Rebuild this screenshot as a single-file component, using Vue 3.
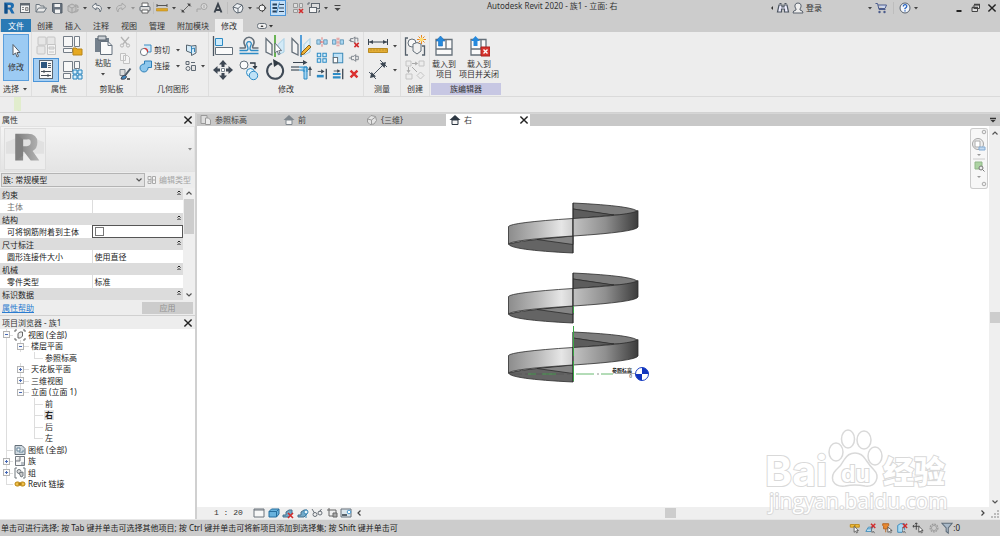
<script setup>
import { ref } from 'vue'

const quickAccess = [
  { icon: 'logo', label: 'Revit' },
  { icon: 'window', label: '主页' },
  { icon: 'open', label: '打开' },
  { icon: 'save', label: '保存' },
  { icon: 'sync', label: '同步' },
  { caret: true },
  { icon: 'undo', label: '放弃' },
  { caret: true },
  { icon: 'redo', label: '重做' },
  { caret: true, dim: true },
  { icon: 'print', label: '打印' },
  { sep: true, tight: true },
  { icon: 'ruler', label: '测量' },
  { caret: true },
  { icon: 'dimension', label: '对齐尺寸标注' },
  { icon: 'tag', label: '按类别标记' },
  { icon: 'letter', label: '文字' },
  { sep: true },
  { icon: 'house', label: '默认三维视图' },
  { caret: true },
  { icon: 'section', label: '剖面' },
  { icon: 'thin', label: '细线', on: true },
  { sep: true },
  { icon: 'closehidden', label: '关闭非活动视图' },
  { icon: 'switch', label: '切换窗口' },
  { caret: true },
  { icon: 'customize', label: '自定义快速访问工具栏' },
]

const ribbonTabs = ['文件', '创建', '插入', '注释', '视图', '管理', '附加模块', '修改']
const activeRibbon = ref('修改')

const modifyLarge = [
  ['align', '对齐'], ['offset', '偏移'], ['mirrorpick', '镜像 - 拾取轴'], ['mirrordraw', '镜像 - 绘制轴'],
  ['move', '移动'], ['copy', '复制'], ['rotate', '旋转'], ['trim', '修剪'],
]
const modifySmall = [
  ['split', '拆分图元'], ['splitgap', '用间隙拆分'], ['unpin', '解锁'],
  ['array', '阵列'], ['scale', '缩放'], ['pin', '锁定'],
  ['extend', '修剪/延伸单个图元'], ['extendmulti', '修剪/延伸多个图元'], ['delete', '删除'],
]

const groups = [
  { name: '约束', prop: '主体', value: '', dim: true },
  { name: '结构', prop: '可将钢筋附着到主体', check: true },
  { name: '尺寸标注', prop: '圆形连接件大小', value: '使用直径' },
  { name: '机械', prop: '零件类型', value: '标准' },
  { name: '标识数据' },
]
const attachRebar = ref(false)
const family = ref('族: 常规模型')

const tree = [
  { text: '视图 (全部)', level: 0, box: '-', icon: 'views' },
  { text: '楼层平面', level: 1, box: '-' },
  { text: '参照标高', level: 2, last: true },
  { text: '天花板平面', level: 1, box: '+' },
  { text: '三维视图', level: 1, box: '+' },
  { text: '立面 (立面 1)', level: 1, box: '-', last: true },
  { text: '前', level: 2 },
  { text: '右', level: 2, active: true },
  { text: '后', level: 2 },
  { text: '左', level: 2, last: true },
  { text: '图纸 (全部)', level: 0, icon: 'sheets' },
  { text: '族', level: 0, box: '+', icon: 'families' },
  { text: '组', level: 0, box: '+', icon: 'groups' },
  { text: 'Revit 链接', level: 0, icon: 'link', last: true },
]

const viewTabs = [
  { text: '参照标高', icon: 'plan' },
  { text: '前', icon: 'elev' },
  { text: '{三维}', icon: 'cube' },
  { text: '右', icon: 'elev', active: true },
]
const viewControls = [
  ['detail', '详细程度'], ['style', '视觉样式'], ['sunoff', '日光路径'], ['shadow', '阴影'],
  ['glasses', '临时隐藏/隔离'], ['crop', '裁剪区域'], ['reveal', '显示约束'],
]
const selectionTools = [
  ['sellink', '选择链接'], ['selunder', '选择基线图元'], ['selpin', '选择锁定图元'],
  ['selface', '按面选择图元'], ['seldrag', '选择时拖拽图元'], ['gear', '后台进程'], ['filter', '过滤器'],
]
const turns = [0, 70, 129]
</script>

<template>
  <div class="app">
    <svg class="defs" aria-hidden="true">
      <defs>
        <linearGradient id="band-left"><stop offset="0" stop-color="#8c8c8c" /><stop offset=".45" stop-color="#b9b9b9" /><stop offset=".82" stop-color="#e6e6e6" /><stop offset="1" stop-color="#cfcfcf" /></linearGradient>
        <linearGradient id="band-right"><stop offset="0" stop-color="#c2c2c2" /><stop offset=".5" stop-color="#8f8f8f" /><stop offset="1" stop-color="#3c3c3c" /></linearGradient>
        <linearGradient id="logo-grey"><stop offset="0" stop-color="#7c7c7c" /><stop offset="1" stop-color="#b4b4b4" /></linearGradient>
      </defs>
      <symbol id="caret" viewBox="0 0 8 8"><path d="M2 3h4L4 5.5z" fill="#444" /></symbol>
      <symbol id="close" viewBox="0 0 10 10"><path d="M2 2l6 6M8 2L2 8" stroke="#222" stroke-width="1.2" /></symbol>
      <symbol id="up" viewBox="0 0 10 10"><path d="M2.500 6.500L5 4l2.500 2.500" fill="none" stroke="#555" stroke-width="1.200" /></symbol>
      <symbol id="down" viewBox="0 0 10 10"><path d="M2.500 3.500L5 6l2.500-2.500" fill="none" stroke="#555" stroke-width="1.200" /></symbol>
      <symbol id="left" viewBox="0 0 10 10"><path d="M6.500 2.500L4 5l2.500 2.500" fill="none" stroke="#444" stroke-width="1.200" /></symbol>
      <symbol id="right" viewBox="0 0 10 10"><path d="M3.500 2.500L6 5 3.500 7.500" fill="none" stroke="#444" stroke-width="1.200" /></symbol>
      <symbol id="fold" viewBox="0 0 8 8"><path d="M2.500 3.500L4 2l1.500 1.500M2.500 6L4 4.500 5.500 6" fill="none" stroke="#222" /></symbol>

      <symbol id="logo" viewBox="0 0 16 16"><path d="M3.500 2.500h6q3.500 0 3.500 3 0 2.400-2 3l2.500 5h-3L8.300 9.500H6.500v4h-3zM6.500 5v2.400h2.300q1.200 0 1.200-1.200T8.800 5z" fill="#1f6db0" fill-rule="evenodd" /><path d="M3.500 2.500l3 2.500v8.500h-3z" fill="#144f86" /></symbol>
      <symbol id="window" viewBox="0 0 16 16"><rect x="3.500" y="3.500" width="9" height="9" fill="#f4f4f4" stroke="#606870" /><path d="M3 3.500h10v2H3z" fill="#606870" /><path d="M5 7.500h2M5 9.500h2M8.500 7.500h2.500v3H8.500z" stroke="#888" fill="#ccc" /></symbol>
      <symbol id="open" viewBox="0 0 16 16"><path d="M3 12V4.500h3.500L7.500 6H11v2M3 12l2.500-4H13.500l-2.500 4z" fill="#e8e8e8" stroke="#6c767f" /></symbol>
      <symbol id="save" viewBox="0 0 16 16"><path d="M3.500 3.500h9.500v9.500h-8l-1.500-1.500z" fill="#6a7480" stroke="#545e69" /><path d="M5.500 4h5.500v3H5.500zM6 9.500h5V13H6z" fill="#f2f2f2" /></symbol>
      <symbol id="sync" viewBox="0 0 16 16"><path d="M3 6l4-2 4 2v5l-4 2-4-2zM3 6l4 2 4-2M7 8v5" fill="#c4c4c4" stroke="#a2a2a2" /><path d="M10 5q3 0 3 3M9 12q4 0 4-3" stroke="#aaa" fill="none" stroke-width="1.500" /></symbol>
      <symbol id="undo" viewBox="0 0 16 16"><path d="M7 3L3 6.500 7 10V8q4-.5 4 4 2-2.500 1.300-4.500Q11 5 7 5z" fill="#eee" stroke="#66717c" /></symbol>
      <symbol id="redo" viewBox="0 0 16 16"><path d="M9 3l4 3.500L9 10V8q-4-.5-4 4-2-2.500-1.300-4.500Q5 5 9 5z" fill="#ccc" stroke="#a8a8a8" /></symbol>
      <symbol id="print" viewBox="0 0 16 16"><path d="M5 7V3h6v4" fill="#fff" stroke="#666" /><rect x="3" y="6.500" width="10" height="4.500" rx="1" fill="#ddd" stroke="#606870" /><path d="M5 10h6v3H5z" fill="#fff" stroke="#666" /></symbol>
      <symbol id="ruler" viewBox="0 0 16 16"><path d="M3 5.500h10M3 4v3M13 4v3" stroke="#555" /><path d="M2.500 8.500h11V11h-11z" fill="#e0a624" stroke="#b98a20" stroke-width=".6" /></symbol>
      <symbol id="dimension" viewBox="0 0 16 16"><path d="M4 12l8-8M3 9.500L6.500 13M9.500 3L13 6.500" stroke="#666" fill="none" /><path d="M3.500 12.500l.5-3 2.500 2.500zM12.500 3.500l-.5 3L9.500 4z" fill="#444" /></symbol>
      <symbol id="tag" viewBox="0 0 16 16"><circle cx="10" cy="6.500" r="3" fill="#d9d9d9" stroke="#a4a4a4" /><path d="M3 12V9h4M10 5v3" stroke="#a4a4a4" fill="none" /></symbol>
      <symbol id="letter" viewBox="0 0 16 16"><path d="M4.500 12.500L8 4l3.500 8.500M6 10h4" fill="none" stroke="#3b434c" stroke-width="1.900" /></symbol>
      <symbol id="house" viewBox="0 0 16 16"><path d="M3 7l4-3.500 5 1.500 1 3-1.500 4L7 13l-3-2.500z" fill="#eef1f4" stroke="#5c6670" /><path d="M3 7l5 1.500L12 5M8 8.500V13" fill="none" stroke="#5c6670" /></symbol>
      <symbol id="section" viewBox="0 0 16 16"><circle cx="8" cy="8" r="3" fill="#f4f4f4" stroke="#444" /><path d="M8 3.500L12.500 8 8 12.500V11a3 3 0 0 0 0-6z" fill="#444" /><path d="M2.500 8H5" stroke="#444" /></symbol>
      <symbol id="thin" viewBox="0 0 16 16"><path d="M2.500 4.500H7M2.500 8H7M2.500 11.500H7" stroke="#28425c" stroke-width="2" /><path d="M9 4.500h5M9 8h5M9 11.500h5" stroke="#28425c" /><path d="M9.500 2.500L6.500 13" stroke="#4a90cc" /></symbol>
      <symbol id="closehidden" viewBox="0 0 16 16"><path d="M3.500 3.500h4v4h-4zM9.500 3.500h3v4h-3zM3.500 9.500h4v3h-4z" fill="#ddd" stroke="#999" /><path d="M9 9l4 4M13 9l-4 4" stroke="#d22c2c" stroke-width="1.600" /></symbol>
      <symbol id="switch" viewBox="0 0 16 16"><rect x="5.500" y="3.500" width="8" height="5" fill="#ddd" stroke="#606870" /><rect x="3.500" y="7.500" width="7" height="5" fill="#f4f4f4" stroke="#606870" /><path d="M2 5V3h2M13.500 10v2H12" fill="none" stroke="#606870" /></symbol>
      <symbol id="customize" viewBox="0 0 16 16"><path d="M4.500 5.500h6" stroke="#444" /><path d="M4.500 8h6l-3 3z" fill="#444" /></symbol>

      <symbol id="binoculars" viewBox="0 0 14 14"><path d="M3 4h3v2h2V4h3l1.500 7h-4V8h-3v3h-4z" fill="#eef" stroke="#4c5560" stroke-width="1.200" /><path d="M3.500 2.500h2M8.500 2.500h2" stroke="#4c5560" /></symbol>
      <symbol id="user" viewBox="0 0 14 14"><path d="M2 12q0-2.500 3-3V8Q3.500 6 4 4q.5-2 3-2t3 2q.5 2-1 4v1q3 .5 3 3z" fill="#eee" stroke="#58616c" /></symbol>
      <symbol id="cart" viewBox="0 0 14 14"><path d="M1.500 2.500h2l1.500 6h6.500M4 4h8.500L11 7.500H5" fill="#ccd7f0" stroke="#4c5c8c" /><circle cx="5.500" cy="11" r="1.200" fill="#4c5c8c" /><circle cx="10.500" cy="11" r="1.200" fill="#4c5c8c" /></symbol>
      <symbol id="help" viewBox="0 0 14 14"><circle cx="7" cy="7" r="5" fill="#f3f6fb" stroke="#56606c" /><path d="M5.300 5.500q0-1.800 1.800-1.800t1.700 1.600Q8.800 6.500 7 7.500v.8M7 9.300v1.200" fill="none" stroke="#2763c0" stroke-width="1.300" /></symbol>
      <symbol id="restore" viewBox="0 0 14 14"><path d="M5 4h5.500v3.500H5zM3 6.500h5.500v4H3z" fill="#ddd" stroke="#444" /><path d="M5 3.500h6M3 6.500h6" stroke="#444" stroke-width="1.300" /></symbol>
      <symbol id="minimize" viewBox="0 0 14 14"><path d="M4.500 10h5" stroke="#222" stroke-width="2" /></symbol>

      <symbol id="cursor" viewBox="0 0 12 16"><path d="M3 1.500v10.500l2.500-2 1.500 4 1.500-.7-1.500-3.800h3z" fill="#fff" stroke="#555d66" /></symbol>
      <symbol id="typeprops" viewBox="0 0 22 22"><g fill="#e6e6e6" stroke="#c4c4c4"><rect x="3" y="2" width="8" height="8" rx="1" /><rect x="12" y="2" width="8" height="8" rx="1" /><rect x="2" y="11" width="8" height="8" rx="1" /><path d="M12.500 9.500h8v10h-8z" fill="#f3f3f3" /><path d="M14 12h5v2h-5zM14 17h5" /></g></symbol>
      <symbol id="famcat" viewBox="0 0 22 22"><g fill="#f7f7f7" stroke="#747d87"><path d="M2.500 1.500h9v10h-9zM13.500 1.500h5v10h-5zM2.500 13.500h9v4h-9z" /></g><path d="M12 13h3l1 1h5v6h-9z" fill="#e6a921" stroke="#b98618" /></symbol>
      <symbol id="props" viewBox="0 0 22 22"><rect x="4.500" y="1.500" width="13" height="18" fill="#f8f8f8" stroke="#566473" /><path d="M6 3h6v6H6z" fill="#2c5680" /><path d="M13 4.500h3M13 6.500h3M13 8.500h3" stroke="#566473" /><path d="M6 12.500h10M6 16.500h10M9 11v3M13 15v3" stroke="#444d57" /></symbol>
      <symbol id="famtypes" viewBox="0 0 22 22"><g fill="#f7f7f7" stroke="#747d87"><path d="M2.500 2.500h9v10h-9zM13.500 2.500h5v7h-5zM2.500 14.500h7v5h-7z" /></g><path d="M12 11h4v4h-4zM17 11h4v4h-4zM12 16h4v4h-4zM17 16h4v4h-4z" fill="#d9effb" stroke="#2783bd" /></symbol>
      <symbol id="paste" viewBox="0 0 22 22"><path d="M3 4h14v14H3z" fill="#74808c" /><path d="M6 2h8v4H6z" fill="#c9ced3" stroke="#59636d" /><path d="M8.500 7.500H16l4 4v9H8.500z" fill="#fafafa" stroke="#65717e" /><path d="M16 7.500v4h4" fill="none" stroke="#65717e" /></symbol>
      <symbol id="cut" viewBox="0 0 14 14"><path d="M3 2l6 7M11 2L5 9" stroke="#b4b4b4" stroke-width="1.300" /><circle cx="4" cy="10.500" r="1.600" fill="none" stroke="#b4b4b4" /><circle cx="10" cy="10.500" r="1.600" fill="none" stroke="#b4b4b4" /></symbol>
      <symbol id="copyclip" viewBox="0 0 14 14"><path d="M2.500 2.500h5v7h-5zM5.500 4.500h4l2 2v6h-6z" fill="#f3f3f3" stroke="#c2c2c2" /></symbol>
      <symbol id="match" viewBox="0 0 14 14"><path d="M2 2.500h5v6H2z" fill="#ddd" stroke="#7c848c" /><path d="M12.500 1.500L7.500 8" stroke="#505a66" stroke-width="2" /><path d="M3 12q0-3 4-4l1.500 1.500Q8 13 3 12z" fill="#4289bd" stroke="#445" /><path d="M9 11h3v2H9z" fill="#666" /></symbol>
      <symbol id="cutgeo" viewBox="0 0 14 14"><path d="M5 2h7v7H8" fill="#cfe8f8" stroke="#3a8bc2" /><circle cx="5" cy="9" r="3.600" fill="#fff" stroke="#707a84" /><path d="M5.500 5.400A3.600 3.600 0 0 1 8.600 9" fill="none" stroke="#d33" stroke-width="1.200" /></symbol>
      <symbol id="joingeo" viewBox="0 0 14 14"><path d="M5.500 2h7v6.500H9A4 4 0 1 1 5.500 5z" fill="#8ec7ec" stroke="#2c7fb7" /></symbol>
      <symbol id="cope" viewBox="0 0 14 14"><path d="M2.500 2l5 1 4.500-.5v7.500L7.500 12.500V10l-5-2z" fill="#d5ebf8" stroke="#56646f" /><path d="M7.500 3v7M7.500 6l3-1v4" fill="none" stroke="#3787bb" /></symbol>
      <symbol id="wall" viewBox="0 0 14 14"><path d="M2 2.500h3v3H2zM7.500 6.500h4v5h-4z" fill="#e4e4e4" stroke="#606a74" /><circle cx="4" cy="9.500" r="2" fill="none" stroke="#606a74" /><path d="M7 3.500h4" stroke="#606a74" /></symbol>

      <symbol id="align" viewBox="0 0 22 22"><path d="M1.500 1v20" stroke="#4b5662" stroke-width="1.300" /><path d="M3.500 3.500h7v7h-7z" fill="#cdebfb" stroke="#2d8bc5" /><path d="M3.500 12.500h17v7h-17z" fill="#fafafa" stroke="#65707a" /></symbol>
      <symbol id="offset" viewBox="0 0 22 22"><path d="M1.500 13H7q1-1-.5-3.500a5 5 0 1 1 9 0Q14 12 15 13h5.500" fill="none" stroke="#65707a" stroke-width="1.600" /><path d="M1.500 18.500h19M1.500 15.500H9q2-1 0-5.500a2.300 2.300 0 1 1 4 0q-2 4.500 0 5.500h7.500" fill="none" stroke="#2d8bc5" stroke-width="1.300" /></symbol>
      <symbol id="mirrorpick" viewBox="0 0 22 22"><path d="M2 3.500l6 6V20l-6-3z" fill="#f4f4f4" stroke="#65707a" stroke-width="1.300" /><path d="M20 3.500l-6 6V20l6-3z" fill="#d3eaf7" stroke="#a5cfe5" /><path d="M11 0v22" stroke="#48a62e" stroke-width="1.600" /><path d="M11 8v10l2.300-2 1.300 3.500 1.500-.6-1.300-3.300h2.800z" fill="#fff" stroke="#69727c" /></symbol>
      <symbol id="mirrordraw" viewBox="0 0 22 22"><path d="M2 3.500l6 6V20l-6-3z" fill="#f4f4f4" stroke="#65707a" stroke-width="1.300" /><path d="M20 3.500l-6 6V20l6-3z" fill="#e1f0f8" stroke="#a5cfe5" /><path d="M11 0v22" stroke="#2d8bd5" stroke-width="1.600" /><path d="M19 10l2 2-7 7-3 1 1-3z" fill="#f2b535" stroke="#8a6420" /></symbol>
      <symbol id="move" viewBox="0 0 22 22"><path d="M11 1l4 4.500h-2.500V8h-3V5.500H7zM11 21l4-4.500h-2.500V14h-3v2.500H7zM1 11l4.500-4v2.500H8v3H5.500V15zM21 11l-4.500-4v2.500H14v3h2.500V15z" fill="#3d4753" /><path d="M9.500 9.500h3v3h-3z" fill="#fff" stroke="#7f8992" /></symbol>
      <symbol id="copy" viewBox="0 0 22 22"><circle cx="6" cy="6" r="4" fill="#fbfbfb" stroke="#65707a" /><path d="M12 4h5v4" fill="none" stroke="#303a44" stroke-width="1.300" /><path d="M14.500 7h5L17 10.500z" fill="#303a44" /><circle cx="12.500" cy="13.500" r="4" fill="#e3f3fb" stroke="#2d8bc5" /><circle cx="15.500" cy="16.500" r="4.200" fill="#bfe2f7" stroke="#2d8bc5" /></symbol>
      <symbol id="rotate" viewBox="0 0 22 22"><path d="M14.500 4.500A8 8 0 1 1 8 4.400" fill="none" stroke="#404b57" stroke-width="2" /><path d="M9 0l7 4-6 4z" fill="#303a44" /></symbol>
      <symbol id="trim" viewBox="0 0 22 22"><path d="M1 8h8M1 11h8" stroke="#65707a" stroke-width="1.300" /><path d="M9 8h8v5M9 11h5v2M14 8h3v12h-3z" fill="#9fd3f2" stroke="#2d8bc5" /><path d="M3 3.500h12M20 10v7" stroke="#3b4652" /><path d="M17.500 3.500L13 1v5zM20 7l-2 4h4z" fill="#3b4652" /></symbol>
      <symbol id="split" viewBox="0 0 14 14"><path d="M1 4.500h4v5H1zM9 4.500h4v5H9z" fill="#a8d6f1" stroke="#5b93b5" /><path d="M7 1.500v11M4.500 7h5" stroke="#d66" stroke-dasharray="3 1" /></symbol>
      <symbol id="splitgap" viewBox="0 0 14 14"><path d="M.5 4.500h4v5h-4zM9.500 4.500h4v5h-4z" fill="#a8d6f1" stroke="#5b93b5" /><path d="M6 2v10M8 2v10" stroke="#d77" stroke-dasharray="3 1" /></symbol>
      <symbol id="unpin" viewBox="0 0 14 14"><path d="M1 5h3M3 3h3l2-2v7L6 6.500H3zM8 2.500h3.500v4" fill="#eee" stroke="#6f7780" /><path d="M7.500 8l5 5M12.500 8l-5 5" stroke="#d22c2c" stroke-width="1.800" /></symbol>
      <symbol id="array" viewBox="0 0 14 14"><path d="M1.500 1.500h4v4h-4zM8 1.500h4v4H8zM1.500 8h4v4h-4z" fill="#d5edfa" stroke="#2d8bc5" stroke-width="1.200" /><path d="M8 8h4v4H8z" fill="#d5edfa" stroke="#2d8bc5" stroke-width="1.200" /></symbol>
      <symbol id="scale" viewBox="0 0 14 14"><path d="M1.500 1.500h11v11h-11z" fill="#bfe2f7" stroke="#3c8ab9" stroke-width="1.200" /><path d="M1.500 6.500h5v6h-5z" fill="#fff" stroke="#65707a" stroke-width="1.200" /></symbol>
      <symbol id="pin" viewBox="0 0 14 14"><path d="M1 7h3M4 5h3l2-2v8L7 9H4zM9 5h3v4H9" fill="#eee" stroke="#727a82" /></symbol>
      <symbol id="extend" viewBox="0 0 14 14"><path d="M12 1v12" stroke="#3b4652" stroke-width="1.500" /><path d="M1 9.500h8" stroke="#2d8bc5" stroke-width="3" /><path d="M2 4h4" stroke="#3b4652" /><path d="M10 4L6 1.500v5z" fill="#3b4652" /></symbol>
      <symbol id="extendmulti" viewBox="0 0 14 14"><path d="M12.500 1v12" stroke="#3b4652" stroke-width="1.500" /><path d="M1 7h9M1 11h9" stroke="#2d8bc5" stroke-width="2.500" /><path d="M2 3.500h4" stroke="#3b4652" /><path d="M10 3.500L6 1.500v4z" fill="#3b4652" /></symbol>
      <symbol id="delete" viewBox="0 0 14 14"><path d="M3 3l8 8M11 3l-8 8" stroke="#da3030" stroke-width="2.800" /></symbol>
      <symbol id="measure" viewBox="0 0 22 22"><path d="M2 7h18M1.500 4v6M20.500 4v6" stroke="#3b4652" /><path d="M2 7l4-2v4zM20 7l-4-2v4z" fill="#3b4652" /><path d="M1.500 13.500h19v4h-19z" fill="#e3ad34" stroke="#b98a20" /><path d="M4 14v2M7 14v2M10 14v2M13 14v2M16 14v2M19 14v2" stroke="#a07820" stroke-width=".5" /></symbol>
      <symbol id="aligned" viewBox="0 0 22 22"><path d="M5 17L17 5M2 13l7 7M13 1l7 7" stroke="#4b5662" /><path d="M3 19l1.500-6 4.500 4.500zM19 3l-1.500 6L13 4.500z" fill="#3b4652" /></symbol>
      <symbol id="group" viewBox="0 0 22 22"><path d="M4 3H1.500v17H4M18 11h2.500v9H18" fill="none" stroke="#56616c" stroke-width="1.300" /><circle cx="8" cy="8" r="4" fill="#f8f8f8" stroke="#65707a" /><path d="M9 9q4-3 8 0v7l-4 3-4-3z" fill="#f0f0f0" stroke="#65707a" /><path d="M17.500 0v9M13 4.500h9M14.500 1.500l6 6M20.500 1.500l-6 6" stroke="#e88620" /><circle cx="17.500" cy="4.500" r="2" fill="#ffdf71" /></symbol>
      <symbol id="similar" viewBox="0 0 22 22"><path d="M2 2h5v5H2zM15 2h5v5h-5zM2 15h6v5H2zM16.500 13l3.500 3.500-3.500 3.500-3.500-3.500z" fill="#ececec" stroke="#c4c4c4" /><path d="M8 4.500h5M4.500 8v5M8 8l5 5M11 3l2.500 1.500L11 6M3 11l1.500 2.500L6 11" stroke="#aaa" fill="none" /></symbol>
      <symbol id="load" viewBox="0 0 22 22"><path d="M3 4.500h16V20H3z" fill="#fafafa" stroke="#65707a" stroke-width="1.300" /><path d="M13 4.500V14H3M13 14h6" fill="none" stroke="#65707a" stroke-width="1.300" /><path d="M7.500 1L12 6H9.500v5h-4V6H3z" fill="#2489dd" stroke="#1769b5" stroke-width=".6" /></symbol>
      <symbol id="loadclose" viewBox="0 0 22 22"><path d="M3 4.500h15V20H3z" fill="#fafafa" stroke="#65707a" stroke-width="1.300" /><path d="M13 4.500V14H3" fill="none" stroke="#65707a" stroke-width="1.300" /><path d="M7.500 1L12 6H9.500v5h-4V6H3z" fill="#2489dd" /><path d="M13 12h9v9h-9z" fill="#d6342f" stroke="#aa201e" /><path d="M15.500 14.500l4 4M19.500 14.500l-4 4" stroke="#fff" stroke-width="1.400" /></symbol>

      <symbol id="edittype" viewBox="0 0 10 10"><path d="M1 1.500h3v3H1zM5.500 1.500h3v7h-3zM1 6h3v2.500H1zM4 5h5" fill="#f4f4f4" stroke="#aaa" /></symbol>
      <symbol id="views" viewBox="0 0 12 12"><path d="M3 1H1v2M9 1h2v2M3 11H1V9M9 11h2V9" fill="none" stroke="#666" /><path d="M4 4.500L6 3h2.500v4L6.500 9H4z" fill="#eee" stroke="#666" /></symbol>
      <symbol id="sheets" viewBox="0 0 12 12"><path d="M1 1.500h7l3 3v6H1z" fill="#cfd8df" stroke="#65707a" /><path d="M3 4h3v3H3zM5 8h4V6" fill="#fff" stroke="#65859b" /></symbol>
      <symbol id="families" viewBox="0 0 12 12"><path d="M1.500 1.500h9v9h-9z" fill="#f8f8f8" stroke="#757b82" /><path d="M6 1.500V6H1.500" fill="#ddd" stroke="#757b82" /><path d="M7 7h3v3H7z" fill="#b9bec4" /></symbol>
      <symbol id="groups" viewBox="0 0 12 12"><path d="M3 1H1v10h2M9 1h2v10H9" fill="none" stroke="#70787f" /><circle cx="5" cy="4.500" r="2" fill="#ddd" stroke="#717980" /><path d="M5 6l4-1v4L7 10z" fill="#ccc" stroke="#717980" /></symbol>
      <symbol id="link" viewBox="0 0 12 12"><rect x="1" y="4" width="5" height="4" rx="2" fill="#f0c14c" stroke="#b9830e" /><rect x="6" y="4" width="5" height="4" rx="2" fill="#f0c14c" stroke="#b9830e" /><path d="M4 6h4" stroke="#94690d" /></symbol>

      <symbol id="plan" viewBox="0 0 12 12"><path d="M1 1.500h6v8H1z" fill="#ddd" stroke="#999" /><path d="M5.500 4h3l2 2v4.500h-5z" fill="#ececec" stroke="#999" /></symbol>
      <symbol id="elev" viewBox="0 0 12 12"><path d="M6 1l5.500 5H.5z" fill="currentColor" /><path d="M3 6h6v4.500H3z" fill="#f4f4f4" stroke="currentColor" /></symbol>
      <symbol id="cube" viewBox="0 0 12 12"><path d="M1.500 5L5 1.500l4.500 1 1 4L8 10l-4 .5L1.500 8z" fill="#e3e3e3" stroke="#999" /><path d="M1.500 5l4 1 4-3M5.500 6v4.500" fill="none" stroke="#999" /></symbol>

      <symbol id="detail" viewBox="0 0 12 12"><path d="M1 2h10v8H1z" fill="#f7f7f7" stroke="#6c747c" /><path d="M1 3h10" stroke="#6c747c" /></symbol>
      <symbol id="style" viewBox="0 0 12 12"><path d="M1 4.500L3.500 2H11v5L8.500 10H1z" fill="#68b2dd" stroke="#276f9e" /><path d="M1 4.500h7.500L11 2M8.500 4.500V10" fill="none" stroke="#276f9e" /></symbol>
      <symbol id="sunoff" viewBox="0 0 12 12"><path d="M1 8h3V5l3-2h3v4l-3 3H1z" fill="#72a9c8" stroke="#47708d" /><path d="M6 6l5 5M11 6l-5 5" stroke="#d22c2c" stroke-width="1.600" /></symbol>
      <symbol id="shadow" viewBox="0 0 12 12"><path d="M1 8h3V5l3-2h3v4l-3 3H1z" fill="#72a9c8" stroke="#47708d" /><circle cx="9" cy="5" r="2" fill="#e8f5fc" stroke="#3687b8" /><path d="M9 7v4" stroke="#3687b8" /></symbol>
      <symbol id="glasses" viewBox="0 0 12 12"><path d="M1 2l2.500 4M10.500 2l-2 3" stroke="#697078" /><circle cx="4" cy="7.500" r="2" fill="none" stroke="#697078" /><circle cx="9" cy="6" r="2" fill="none" stroke="#697078" /></symbol>
      <symbol id="crop" viewBox="0 0 12 12"><path d="M1 3h9v7M3 1v8h6" fill="none" stroke="#666" /><path d="M7 6h4v4H7z" fill="#aaa" stroke="#666" /></symbol>
      <symbol id="reveal" viewBox="0 0 12 12"><path d="M1 2h10v8H1z" fill="#dce5eb" stroke="#66717a" /><path d="M2 7h5v2H2z" fill="#59636c" /><circle cx="9" cy="5" r="1.800" fill="#fff" stroke="#4b9ace" /></symbol>

      <symbol id="sellink" viewBox="0 0 14 14"><path d="M1.500 3h5v3h-5zM7 3h5v3H7z" fill="#f0be3e" stroke="#b9830e" /><path d="M6 5v7l1.800-1.500L9 13l1-1-1-2h2z" fill="#fff" stroke="#555" /></symbol>
      <symbol id="selunder" viewBox="0 0 14 14"><path d="M1 11l3-5h5l-2 5zM3 8h5" fill="#c5e5f6" stroke="#3486b9" /><path d="M7 2l5 5M12 2L7 7" stroke="#d22c2c" stroke-width="1.700" /><path d="M8 6v6l2-1 1 2" fill="#fff" stroke="#555" /></symbol>
      <symbol id="selpin" viewBox="0 0 14 14"><path d="M2 2h7v2L8 5v3H3V5L2 4zM5.500 8v4" fill="#e88932" stroke="#b35d16" /><path d="M8 6v6l2-1 1 2 1-1-1-2h2z" fill="#fff" stroke="#555" /></symbol>
      <symbol id="selface" viewBox="0 0 14 14"><path d="M2 4l3-2h5v7l-3 3H2z" fill="#a7d8f2" stroke="#2c83b9" /><path d="M8 2l5 5M13 2L8 7" stroke="#d22c2c" stroke-width="1.700" /><path d="M8 6v6l2-1 1 2" fill="#fff" stroke="#555" /></symbol>
      <symbol id="seldrag" viewBox="0 0 14 14"><path d="M1 5h8M5 1v8M1 5l1.500-1.500M1 5l1.500 1.500M5 1L3.500 2.500M5 1l1.500 1.500" stroke="#333" /><path d="M8 5v7l2-1.500 1 2.500 1-1-1-2h2z" fill="#fff" stroke="#444" /></symbol>
      <symbol id="gear" viewBox="0 0 14 14"><circle cx="7" cy="7" r="4.500" fill="none" stroke="#999" stroke-width="1.500" stroke-dasharray="2 1" /><circle cx="7" cy="7" r="3" fill="none" stroke="#999" /></symbol>
      <symbol id="filter" viewBox="0 0 14 14"><path d="M1 1.500h12L8.500 7v6L6 11V7z" fill="#a9b9c8" stroke="#5e6c7a" stroke-width="1.200" /></symbol>
    </svg>

    <header class="titlebar">
      <div class="quick">
        <template v-for="(q, i) in quickAccess" :key="i">
          <span v-if="q.sep" class="qsep" :class="{ tight: q.tight }"></span>
          <button v-else-if="q.caret" class="caretbtn" :class="{ dim: q.dim }" aria-label="展开"><svg class="i8"><use href="#caret" /></svg></button>
          <button v-else class="qbtn" :class="{ on: q.on }" :aria-label="q.label"><svg class="i16"><use :href="'#' + q.icon" /></svg></button>
        </template>
      </div>
      <h1>Autodesk Revit 2020 - 族1 - 立面: 右</h1>
      <div class="account">
        <button class="caretbtn" aria-label="收拢"><svg class="i8"><path d="M5 2v4L3 4z" fill="#333" /></svg></button>
        <button aria-label="搜索"><svg class="i14"><use href="#binoculars" /></svg></button>
        <button class="login"><svg class="i14"><use href="#user" /></svg>登录</button>
        <button class="caretbtn" aria-label="账户"><svg class="i8"><use href="#caret" /></svg></button>
        <button aria-label="应用商店"><svg class="i14"><use href="#cart" /></svg></button>
        <span class="qsep"></span>
        <button aria-label="帮助"><svg class="i14"><use href="#help" /></svg></button>
        <button class="caretbtn" aria-label="帮助选项"><svg class="i8"><use href="#caret" /></svg></button>
      </div>
      <div class="winbtns">
        <button aria-label="最小化"><svg class="i14"><use href="#minimize" /></svg></button>
        <button aria-label="还原"><svg class="i14"><use href="#restore" /></svg></button>
        <button aria-label="关闭"><svg class="i12"><use href="#close" /></svg></button>
      </div>
    </header>

    <nav class="tabs">
      <button v-for="t in ribbonTabs" :key="t" :class="{ file: t === '文件', active: t === activeRibbon }" @click="activeRibbon = t">{{ t }}</button>
      <button class="toggle" aria-label="最小化功能区"><svg width="20" height="10" viewBox="0 0 20 10"><rect x="1.500" y="2.500" width="9" height="5" rx="2" fill="#eee" stroke="#68717a" /><path d="M4.500 6h3L6 4z" fill="#333" /><path d="M13 4h4l-2 2.500z" fill="#333" /></svg></button>
    </nav>

    <div class="ribbon">
      <section class="panel p-select">
        <div class="tools"><button class="modify"><svg class="arrow"><use href="#cursor" /></svg>修改</button></div>
        <h2>选择 <svg class="i8"><use href="#caret" /></svg></h2>
      </section>
      <section class="panel p-props">
        <div class="tools grid2">
          <button aria-label="类型属性"><svg class="i22"><use href="#typeprops" /></svg></button>
          <button aria-label="族类别和族参数"><svg class="i22"><use href="#famcat" /></svg></button>
          <button class="on" aria-label="属性"><svg class="i22"><use href="#props" /></svg></button>
          <button aria-label="族类型"><svg class="i22"><use href="#famtypes" /></svg></button>
        </div>
        <h2>属性</h2>
      </section>
      <section class="panel p-clip">
        <div class="tools">
          <button class="big paste"><svg class="i22"><use href="#paste" /></svg>粘贴<svg class="i8"><use href="#caret" /></svg></button>
          <div class="stack">
            <button aria-label="剪切"><svg class="i14"><use href="#cut" /></svg></button>
            <button aria-label="复制到剪贴板"><svg class="i14"><use href="#copyclip" /></svg></button>
            <button aria-label="匹配类型属性"><svg class="i14"><use href="#match" /></svg></button>
          </div>
        </div>
        <h2>剪贴板</h2>
      </section>
      <section class="panel p-geo">
        <div class="tools geo">
          <button class="wide"><svg class="i14"><use href="#cutgeo" /></svg>剪切</button>
          <button class="caretbtn" aria-label="剪切选项"><svg class="i8"><use href="#caret" /></svg></button>
          <button aria-label="连接端切割"><svg class="i14"><use href="#cope" /></svg></button>
          <span></span>
          <button class="wide"><svg class="i14"><use href="#joingeo" /></svg>连接</button>
          <button class="caretbtn" aria-label="连接选项"><svg class="i8"><use href="#caret" /></svg></button>
          <button aria-label="拆分面"><svg class="i14"><use href="#wall" /></svg></button>
          <button class="caretbtn" aria-label="拆分选项"><svg class="i8"><use href="#caret" /></svg></button>
        </div>
        <h2>几何图形</h2>
      </section>
      <section class="panel p-modify">
        <div class="tools">
          <div class="grid4"><button v-for="m in modifyLarge" :key="m[0]" :aria-label="m[1]"><svg class="i22"><use :href="'#' + m[0]" /></svg></button></div>
          <div class="grid3"><button v-for="m in modifySmall" :key="m[0]" :aria-label="m[1]"><svg class="i12"><use :href="'#' + m[0]" /></svg></button></div>
        </div>
        <h2>修改</h2>
      </section>
      <section class="panel p-measure">
        <div class="tools measure">
          <button aria-label="测量"><svg class="i22"><use href="#measure" /></svg></button>
          <button class="caretbtn" aria-label="测量选项"><svg class="i8"><use href="#caret" /></svg></button>
          <button aria-label="对齐标注"><svg class="i22"><use href="#aligned" /></svg></button>
          <button class="caretbtn" aria-label="标注选项"><svg class="i8"><use href="#caret" /></svg></button>
        </div>
        <h2>测量</h2>
      </section>
      <section class="panel p-create">
        <div class="tools grid1">
          <button aria-label="创建组"><svg class="i22"><use href="#group" /></svg></button>
          <button aria-label="创建类似"><svg class="i22"><use href="#similar" /></svg></button>
        </div>
        <h2>创建</h2>
      </section>
      <section class="panel p-family">
        <div class="tools">
          <button class="big"><svg class="i22"><use href="#load" /></svg><span>载入到<br>项目</span></button>
          <button class="big second"><svg class="i22"><use href="#loadclose" /></svg><span>载入到<br>项目并关闭</span></button>
        </div>
        <h2>族编辑器</h2>
      </section>
    </div>
    <div class="options"><span></span></div>

    <div class="work">
      <aside>
        <section class="properties">
          <header class="dockhead"><h2>属性</h2><button aria-label="关闭属性"><svg class="i12"><use href="#close" /></svg></button></header>
          <div class="typebox">
            <svg class="thumb" viewBox="0 0 42 42"><path d="M1 26V14l12-5h16l12 5v12z" fill="#e1e1e1" /><path d="M11 5h13q10 0 10 9 0 7-5 9l7 10h-9l-7-9h-1v9h-8zM19 11v7h4q4 0 4-4t-4-3z" fill="url(#logo-grey)" fill-rule="evenodd" /><path d="M11 5l8 6v17l-8 5z" fill="#808080" /></svg>
            <svg class="i8"><use href="#caret" /></svg>
          </div>
          <div class="typerow">
            <div class="selectbox"><select v-model="family" aria-label="族类型"><option>族: 常规模型</option></select><svg class="i10"><use href="#down" /></svg></div>
            <button class="edittype" disabled><svg class="i10"><use href="#edittype" /></svg>编辑类型</button>
          </div>
          <div class="scrollwrap">
            <table>
              <colgroup><col class="namecol"><col></colgroup>
              <tbody v-for="g in groups" :key="g.name">
                <tr class="group"><th colspan="2"><div><span>{{ g.name }}</span><svg class="i8"><use href="#fold" /></svg></div></th></tr>
                <tr v-if="g.prop" :class="{ dim: g.dim }">
                  <td><label v-if="g.check" for="rebar">{{ g.prop }}</label><template v-else>{{ g.prop }}</template></td>
                  <td :class="{ focus: g.check }"><input v-if="g.check" id="rebar" v-model="attachRebar" type="checkbox"><template v-else>{{ g.value }}</template></td>
                </tr>
              </tbody>
            </table>
            <div class="vscroll"><svg class="i10"><use href="#up" /></svg><span class="thumbbar"></span><svg class="i10 end"><use href="#down" /></svg></div>
          </div>
          <footer><a href="#help">属性帮助</a><button class="apply" disabled>应用</button></footer>
        </section>
        <section class="browser">
          <header class="dockhead"><h2>项目浏览器 - 族1</h2><button aria-label="关闭项目浏览器"><svg class="i12"><use href="#close" /></svg></button></header>
          <ul>
            <li v-for="(n, i) in tree" :key="i" :class="['l' + n.level, { last: n.last, sub: n.level > 0 }]">
              <span v-if="i > 0 && i < 10" class="trunk"></span>
              <span class="branch"><button v-if="n.box" class="box" :aria-label="n.box === '+' ? '展开' : '折叠'"><svg width="7" height="7" viewBox="0 0 7 7"><rect x=".5" y=".5" width="6" height="6" fill="#fafafa" stroke="#b3b3b3" /><path :d="n.box === '+' ? 'M2 3.500h3M3.500 2v3' : 'M2 3.500h3'" stroke="#4668b5" /></svg></button></span>
              <svg v-if="n.icon" class="i12"><use :href="'#' + n.icon" /></svg>
              <span class="node" :class="{ active: n.active }">{{ n.text }}</span>
            </li>
          </ul>
        </section>
      </aside>

      <main>
        <div class="viewtabs">
          <button v-for="v in viewTabs" :key="v.text" :class="{ active: v.active }"><svg class="i12"><use :href="'#' + v.icon" /></svg><span>{{ v.text }}</span><svg v-if="v.active" class="i12 x"><use href="#close" /></svg></button>
          <button class="tablist" aria-label="视图列表"><svg class="i8"><path d="M1 2.500h6" stroke="#333" stroke-width="1.500" /><path d="M1.500 4h5L4 6.500z" fill="#333" /></svg></button>
        </div>
        <div class="viewrow">
          <div class="canvas">
            <svg class="model" width="160" height="190" viewBox="500 198 160 190" role="img" aria-label="螺旋体立面">
              <g v-for="t in turns" :key="t" :transform="`translate(0 ${t})`" stroke="#2c2c2c" stroke-width=".8" stroke-linejoin="round">
                <path d="M573 203Q636 206 638 212Q630 215 612 215L573 209z" fill="#7c7c7c" />
                <path d="M573 209L614 215L573 219z" fill="#5c5c5c" />
                <path d="M508.500 244Q520 241 537 239.500L573 236V253Q510 250 508.500 244z" fill="#646464" />
                <path d="M537 239.500L573 236V244.500z" fill="#858585" />
                <path d="M508.500 226.500Q511 222.500 573 218.500V236Q511 240 508.500 244z" fill="url(#band-left)" />
                <path d="M573 218.500Q633 215 638 210.500V227Q636 232 573 236z" fill="url(#band-right)" />
                <path d="M573 203V253" fill="none" />
              </g>
              <path d="M573.500 306v7M573.500 326v30M573.500 361v20" stroke="#3aa545" />
              <path d="M510 374h63" stroke="#555" stroke-width=".7" stroke-dasharray="12 3 3 3" />
              <path d="M528 374h8M542 374h14M576 374h18M601 374h12" stroke="#43a74c" stroke-width=".8" />
              <path d="M597 374h2" stroke="#777" stroke-width=".8" />
              <text x="632" y="372" text-anchor="end" class="level">参照标高</text>
              <text x="632" y="378" text-anchor="end" class="level zero">0</text>
              <path d="M615 373.500h20" stroke="#777" stroke-width=".6" />
              <circle cx="642" cy="374" r="6.500" fill="#fff" stroke="#1d42c4" />
              <path d="M642 374v-6.500a6.500 6.500 0 0 1 6.500 6.500zM642 374v6.500a6.500 6.500 0 0 1-6.500-6.500z" fill="#1236be" />
            </svg>
            <div class="navbar">
              <svg width="18" height="60" viewBox="0 0 18 60"><circle cx="14" cy="4" r="1.800" fill="#eee" stroke="#aaa" /><circle cx="8" cy="16" r="5.500" fill="#eee" stroke="#a5a5a5" /><path d="M5 13h5v6H5z" fill="#fff" stroke="#aaa" /><path d="M9 19h6v3H9z" fill="#c4daf0" stroke="#83abd3" /><path d="M7 26h4l-2 2z" fill="#999" /><path d="M3 31h12" stroke="#ccc" /><path d="M5 34h7v7H5z" fill="#acd3a2" stroke="#8fb787" /><circle cx="11" cy="40" r="2" fill="#eee" stroke="#777" /><path d="M12.500 41.500l2 2" stroke="#777" /><path d="M7 48h4l-2 2z" fill="#999" /><circle cx="14" cy="56" r="1.800" fill="#eee" stroke="#aaa" /></svg>
            </div>
            <svg class="watermark" width="190" height="96" viewBox="0 0 190 96" aria-label="Baidu 经验">
              <g fill="#fff" stroke="#d9d9d9" stroke-width="1.500">
                <ellipse cx="74" cy="30" rx="7" ry="9" /><ellipse cx="86" cy="17" rx="6.500" ry="9" /><ellipse cx="102" cy="18" rx="7" ry="9" /><ellipse cx="113" cy="34" rx="7" ry="9" />
                <path d="M93 31q7 0 11 7 4 6 8 10 5 5 2 11-3 6-11 5-10-2-20 0-9 1-12-5-2-6 3-11 5-4 8-10 4-7 11-7z" />
                <text x="3" y="64" class="wm-a">Bai</text><text x="79" y="60" class="wm-b">du</text><text x="121" y="61" class="wm-c">经验</text>
                <text x="7" y="87" class="wm-d">jingyan.baidu.com</text>
              </g>
            </svg>
          </div>
          <div class="vscroll view"><svg class="i10"><use href="#up" /></svg><span class="thumbbar"></span><svg class="i10 end"><use href="#down" /></svg></div>
        </div>
        <div class="viewbar">
          <span class="scaletext">1 : 20</span>
          <button v-for="c in viewControls" :key="c[0]" :aria-label="c[1]"><svg class="i12"><use :href="'#' + c[0]" /></svg></button>
          <svg class="i10"><use href="#left" /></svg>
          <div class="hscroll"><span></span></div>
          <svg class="i10"><use href="#right" /></svg>
          <svg class="grip" width="11" height="10" viewBox="0 0 11 10"><path d="M8 2h2v2H8zM5 5h2v2H5zM8 5h2v2H8zM2 8h2v2H2zM5 8h2v2H5zM8 8h2v2H8z" fill="#bbb" /></svg>
        </div>
      </main>
    </div>

    <footer class="status">
      <p>单击可进行选择; 按 Tab 键并单击可选择其他项目; 按 Ctrl 键并单击可将新项目添加到选择集; 按 Shift 键并单击可</p>
      <div class="seltools"><button v-for="s in selectionTools" :key="s[0]" :aria-label="s[1]"><svg class="i12"><use :href="'#' + s[0]" /></svg></button><span>:0</span></div>
    </footer>
  </div>
</template>

<style>
body { margin: 0; background: #ccc; }
</style>

<style scoped>
.app { display: flex; flex-direction: column; min-height: 100vh; background: #ccc; color: #333; font: 8px/12px "Noto Sans", "Noto Sans CJK SC", sans-serif; }
* { box-sizing: border-box; }
button, input, select { margin: 0; padding: 0; border: 0; background: none; color: inherit; font: inherit; }
button { display: flex; align-items: center; justify-content: center; flex: none; white-space: nowrap; }
h1, h2, p, ul { margin: 0; padding: 0; font-size: 8px; font-weight: 400; }
svg { display: block; flex: none; }
.defs { position: absolute; width: 0; height: 0; }
.i8 { width: 8px; height: 8px; }
.i10 { width: 10px; height: 10px; }
.i12 { width: 12px; height: 12px; }
.i14 { width: 14px; height: 14px; }
.i16 { width: 16px; height: 16px; }
.i22 { width: 22px; height: 22px; }
.caretbtn { width: 8px; }
.dim { color: #888; }
.caretbtn.dim { opacity: .4; }

.titlebar { display: flex; height: 18px; padding: 0 0 2px 1px; }
.quick { display: flex; align-items: center; width: 486px; }
.qbtn { width: 16px; height: 16px; }
.qbtn.on { background: #c4dff7; outline: 1px solid #4a94d8; outline-offset: -1px; }
.qsep { flex: none; width: 1px; height: 12px; margin: 0 2px 0 1px; background: #bdbdbd; }
.qsep.tight { margin: 0; }
h1 { flex: 1; line-height: 12px; white-space: nowrap; }
.account { display: flex; align-items: center; width: 150px; margin-right: 34px; }
.login { width: 38px; gap: 1px; justify-content: flex-start; margin-right: 37px; margin-left: 1px; }
.account .qsep { margin: 0 4px 0 5px; }
.winbtns { display: flex; align-items: center; gap: 3px; padding-right: 2px; }

.tabs { display: flex; height: 14px; padding: 1px 0 0 1px; }
.tabs button { padding: 0 6px; }
.tabs .file { padding: 0 7px; background: #2a7ab5; color: #fff; }
.tabs .active { background: #ededed; }
.tabs .toggle { margin-left: 7px; }

.ribbon { display: flex; background: #ededed; border-bottom: 1px solid #dadada; }
.panel { display: flex; flex-direction: column; border-right: 1px solid #dedede; padding: 2px 1px 1px; }
.tools { display: flex; height: 48px; }
.panel h2 { display: flex; align-items: center; justify-content: center; height: 12px; margin-top: 1px; }
.p-select { width: 32px; padding-left: 3px; }
.p-select h2 { gap: 2px; justify-content: flex-start; white-space: nowrap; }
.modify { flex-direction: column; gap: 2px; width: 26px; height: 47px; background: #9ccbf3; border: 1px solid #5a9edc; }
.arrow { width: 12px; height: 16px; }
.p-props { width: 55px; }
.grid2 { display: grid; grid-template: 24px 24px / 26px 26px; }
.grid2 .on { background: #a6cff3; border: 1px solid #4a94d8; }
.p-clip { width: 50px; }
.big { flex-direction: column; justify-content: flex-start; line-height: 10px; }
.paste { width: 30px; gap: 2px; }
.stack { display: grid; grid-template-rows: repeat(3, 16px); }
.p-geo { width: 72px; padding-left: 2px; }
.geo { display: grid; grid-template: 16px 16px / 35px 8px 17px 8px; align-content: center; }
.wide { gap: 1px; justify-content: flex-start; }
.p-modify { width: 155px; }
.grid4 { display: grid; grid-template: 24px 24px / repeat(4, 26px); }
.grid3 { display: grid; grid-template: repeat(3, 16px) / repeat(3, 16px); }
.p-measure { width: 37px; }
.measure { display: grid; grid-template: 24px 24px / 26px 9px; }
.p-create { width: 29px; }
.grid1 { display: grid; grid-template: 24px 24px / 26px; }
.p-family { width: 72px; border-right: 0; }
.p-family .tools { padding-top: 1px; }
.p-family .big { width: 26px; gap: 2px; }
.p-family .second { width: 44px; }
.p-family h2 { background: #c7c7e3; }
.options { height: 16px; padding-left: 14px; background: #ededed; border-bottom: 1px solid #d2d2d2; }
.options span { display: block; width: 7px; height: 14px; background: #e1edcd; }

.work { display: flex; flex: 1; background: #d0d0d0; }
aside { display: flex; flex-direction: column; width: 195px; margin-right: 2px; background: #ededed; }
.dockhead { display: flex; align-items: center; justify-content: space-between; height: 13px; padding: 0 1px 0 2px; }
.typebox { display: flex; align-items: center; justify-content: space-between; height: 46px; padding: 1px 0 2px 3px; border: 1px solid #e2e2e2; background: linear-gradient(#f4f4f4, #e4e4e4); }
.typebox .i8 { opacity: .6; }
.thumb { width: 42px; height: 42px; border: 1px solid #ddd; background: #ededed; }
.typerow { display: flex; gap: 2px; height: 16px; padding: 1px; }
.selectbox { display: grid; width: 144px; height: 14px; background: #e2e2e2; border: 1px solid #b4b4b4; align-items: center; }
.selectbox > * { grid-area: 1 / 1; }
.selectbox select { appearance: none; width: 100%; padding-left: 1px; color: #222; }
.selectbox svg { justify-self: end; pointer-events: none; }
.edittype { gap: 2px; color: #a5a5a5; }
.scrollwrap { display: flex; }
table { flex: 1; border-collapse: collapse; table-layout: fixed; color: #222; }
.namecol { width: 92px; }
th, td { padding: 0; font-weight: 400; text-align: left; line-height: 11px; }
th { height: 12px; background: #dcdcdc; padding-left: 2px; }
th div { display: flex; justify-content: space-between; }
td { height: 13px; padding-left: 7px; background: #fff; }
td + td { padding-left: 2px; border-left: 1px solid #ddd; }
.dim td { color: #777; }
td.focus { outline: 1px solid #555; outline-offset: -1px; }
input[type=checkbox] { display: block; appearance: none; width: 9px; height: 9px; border: 1px solid #777; background: #fff; }
.vscroll { display: flex; flex-direction: column; align-items: center; width: 12px; background: #efefef; }
.vscroll .thumbbar { width: 10px; height: 35px; margin-top: 1px; background: #cdcdcd; }
.vscroll .end { margin-top: auto; }
.properties footer { display: flex; align-items: center; justify-content: space-between; height: 15px; padding: 0 2px; }
a { color: #2a7cd0; text-decoration: underline; }
.apply { width: 51px; height: 12px; background: #ccc; color: #909090; }
.properties { border-bottom: 1px solid #d0d0d0; }
.browser { display: flex; flex: 1; flex-direction: column; }
.browser ul { flex: 1; padding-left: 2px; list-style: none; background: #fff; color: #222; }
li { position: relative; display: flex; align-items: center; height: 11px; white-space: nowrap; }
li:nth-child(even) { height: 12px; }
.trunk { position: absolute; left: 4px; top: 0; bottom: 0; border-left: 1px solid #ddd; }
.branch { position: relative; display: flex; align-items: center; flex: none; align-self: stretch; width: 12px; }
.branch::before { content: ""; position: absolute; left: 4px; top: 0; bottom: 0; border-left: 1px solid #ddd; }
.branch::after { content: ""; position: absolute; left: 4px; right: 1px; top: 50%; border-top: 1px solid #ddd; }
.last .branch::before { bottom: 50%; }
.box { position: relative; z-index: 1; margin-left: 1px; }
.l1 { padding-left: 14px; }
.l1 .branch { width: 14px; }
.l2 { padding-left: 28px; }
.l2 .branch { width: 14px; }
.node { padding: 0 1px; line-height: 10px; }
.l0 .node { margin-left: 1px; }
.node.active { background: #e4e4e4; font-weight: 700; }

main { display: flex; flex: 1; flex-direction: column; min-width: 0; }
.viewtabs { display: flex; height: 13px; background: #c8c8c8; border-top: 1px solid #d6d6d6; color: #444; }
.viewtabs button { justify-content: flex-start; gap: 3px; width: 83px; padding-left: 3px; color: #7f878e; }
.viewtabs span { color: #444; }
.viewtabs .active { width: 84px; background: #fff; color: #2d3742; }
.viewtabs .x { margin-left: auto; }
.viewtabs .tablist { width: 11px; margin-left: auto; padding: 0; }
.viewrow { display: flex; flex: 1; }
.canvas { position: relative; flex: 1; background: #fff; }
.model { position: absolute; left: 303px; top: 72px; }
.level { fill: #111; stroke: none; font: 700 5px "Noto Sans CJK SC", sans-serif; }
.zero { font-weight: 400; }
.navbar { position: absolute; right: 1px; top: 2px; width: 18px; height: 61px; background: #f7f7f7; border-radius: 3px; box-shadow: 0 0 0 1px #ccc inset; }
.watermark { position: absolute; right: 37px; bottom: -11px; z-index: 1; }
.watermark text { paint-order: stroke; stroke-width: 2px; }
.wm-a { font: 700 41px Inter, sans-serif; }
.wm-b { font: 700 23px Inter, sans-serif; }
.wm-c { font: 900 31px "Noto Sans CJK SC", sans-serif; }
.wm-d { font: 400 21px "Open Sans", sans-serif; }
.vscroll.view { width: 11px; padding: 2px 0 0; }
.view .thumbbar { height: 11px; margin-top: 174px; }
.viewbar { display: flex; align-items: center; height: 12px; padding-left: 17px; background: #efefef; }
.viewbar button { width: 14px; margin-right: 1px; }
.viewbar button:nth-of-type(even) { margin-right: 0; }
.scaletext { width: 38px; font-family: "Liberation Mono", monospace; white-space: pre; }
.hscroll { flex: 1; }
.hscroll span { display: block; width: 11px; height: 10px; margin-left: 49%; background: #cdcdcd; }
.grip { margin-left: 1px; }
.status { display: flex; align-items: center; justify-content: space-between; height: 17px; border-top: 1px solid #e6e6e6; padding: 0 40px 0 1px; color: #222; }
.status p { white-space: nowrap; }
.seltools { display: flex; align-items: center; }
.seltools button { width: 16px; }
.seltools button:nth-child(3n) { width: 15px; }
.seltools button:last-of-type { width: 12px; }
</style>
